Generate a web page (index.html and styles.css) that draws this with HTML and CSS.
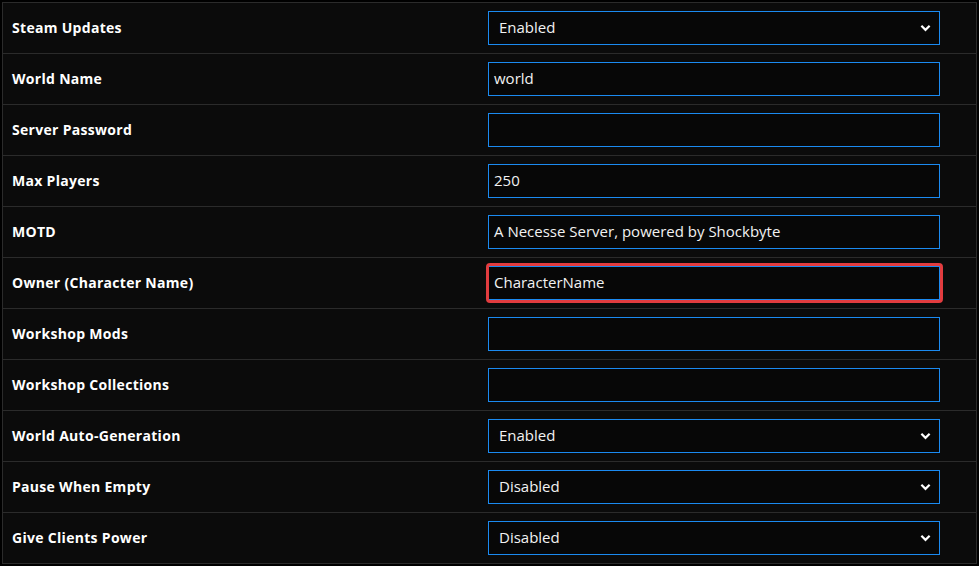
FILE: index.html
```html
<!DOCTYPE html>
<html>
<head>
<meta charset="utf-8">
<link rel="stylesheet" href="styles.css">
</head>
<body>
<div class="table">
  <div class="row"><div class="label">Steam Updates</div><div class="field"><div class="control select"><span>Enabled</span><svg class="chev" viewBox="0 0 12 8" width="11" height="8"><path d="M1.5 1.5 L6 6 L10.5 1.5" fill="none" stroke="#fff" stroke-width="2.4"/></svg></div></div></div>
  <div class="row"><div class="label">World Name</div><div class="field"><div class="control">world</div></div></div>
  <div class="row"><div class="label">Server Password</div><div class="field"><div class="control"></div></div></div>
  <div class="row"><div class="label">Max Players</div><div class="field"><div class="control">250</div></div></div>
  <div class="row"><div class="label">MOTD</div><div class="field"><div class="control">A Necesse Server, powered by Shockbyte</div></div></div>
  <div class="row"><div class="label">Owner (Character Name)</div><div class="field"><div class="control highlight">CharacterName</div></div></div>
  <div class="row"><div class="label">Workshop Mods</div><div class="field"><div class="control"></div></div></div>
  <div class="row"><div class="label">Workshop Collections</div><div class="field"><div class="control"></div></div></div>
  <div class="row"><div class="label">World Auto-Generation</div><div class="field"><div class="control select"><span>Enabled</span><svg class="chev" viewBox="0 0 12 8" width="11" height="8"><path d="M1.5 1.5 L6 6 L10.5 1.5" fill="none" stroke="#fff" stroke-width="2.4"/></svg></div></div></div>
  <div class="row"><div class="label">Pause When Empty</div><div class="field"><div class="control select"><span>Disabled</span><svg class="chev" viewBox="0 0 12 8" width="11" height="8"><path d="M1.5 1.5 L6 6 L10.5 1.5" fill="none" stroke="#fff" stroke-width="2.4"/></svg></div></div></div>
  <div class="row"><div class="label">Give Clients Power</div><div class="field"><div class="control select"><span>Disabled</span><svg class="chev" viewBox="0 0 12 8" width="11" height="8"><path d="M1.5 1.5 L6 6 L10.5 1.5" fill="none" stroke="#fff" stroke-width="2.4"/></svg></div></div></div>
</div>
</body>
</html>
```
FILE: styles.css
```css
html, body {
  margin: 0;
  padding: 0;
  background: #000;
}
body {
  padding: 2px 2px 0 2px;
  font-family: "Open Sans", "DejaVu Sans", sans-serif;
  color: #fff;
}
.table {
  width: 975px;
  box-sizing: border-box;
  border: 1px solid #2b2b2b;
  border-bottom: none;
  background: #0b0b0b;
}
.row {
  display: grid;
  grid-template-columns: 477px 1fr;
  height: 51px;
  box-sizing: border-box;
  border-bottom: 1px solid #2b2b2b;
  align-items: center;
}
.label {
  padding-left: 9px;
  padding-bottom: 2px;
  font-size: 14px;
  font-weight: 700;
  letter-spacing: 0.3px;
}
.field {
  padding-left: 8px;
}
.control {
  position: relative;
  width: 452px;
  height: 34px;
  box-sizing: border-box;
  border: 1px solid #1b8af0;
  background: #070707;
  font-size: 15px;
  line-height: 30px;
  padding-left: 5px;
  color: #f2f2f2;
}
.select {
  display: flex;
  align-items: center;
  justify-content: space-between;
  padding-left: 10px;
  padding-right: 8px;
}
.select span {
  padding-bottom: 2px;
}
.chev {
  display: block;
}
.highlight::after {
  content: "";
  position: absolute;
  left: -3px;
  top: -4px;
  right: -4px;
  bottom: -4px;
  border: 3px solid #e23c3f;
  border-radius: 4px;
}
```
